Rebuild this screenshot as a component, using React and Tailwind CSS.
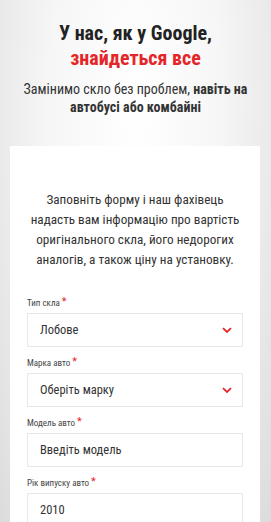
import React from "react";

function Chevron() {
  return (
    <svg width="10" height="7" viewBox="0 0 10 7" className="shrink-0">
      <path d="M1 1.2 L5 5 L9 1.2" fill="none" stroke="#e52629" strokeWidth="1.8" />
    </svg>
  );
}

function Label({ children }) {
  return (
    <div className="text-[9px] leading-[12px] text-[#444] mb-[4px] flex items-start">
      <span>{children}</span>
      <span className="text-[#e52629] text-[11px] leading-[10px] ml-[2px]">*</span>
    </div>
  );
}

function Field({ value, select }) {
  return (
    <div className="h-[34px] border border-[#e8e8e8] bg-white flex items-center justify-between pl-[12px] pr-[10px]">
      <span className="text-[12.5px] text-[#333]">{value}</span>
      {select && <Chevron />}
    </div>
  );
}

const lines = [
  "Заповніть форму і наш фахівець",
  "надасть вам інформацію про вартість",
  "оригінального скла, його недорогих",
  "аналогів, а також ціну на установку.",
];

export default function App() {
  return (
    <div
      className="w-[271px] h-[522px] overflow-hidden bg-[radial-gradient(ellipse_at_50%_20%,#ffffff_0%,#f6f6f6_45%,#dcdcdc_100%)]"
      style={{ fontFamily: "Roboto, 'Noto Sans', sans-serif", fontStretch: "condensed" }}
    >
      <div className="pt-[21px] text-center">
        <h1 className="text-[20px] leading-[25px] font-bold text-[#222]">
          У нас, як у Google,
          <br />
          <span className="text-[#e52629]">знайдеться все</span>
        </h1>
        <p className="mt-[9px] text-[14px] leading-[18px] text-[#333]">
          Замінимо скло без проблем, <b className="font-bold">навіть на
          <br />
          автобусі або комбайні</b>
        </p>
      </div>
      <div className="mt-[30px] ml-[10px] w-[250px] bg-white px-[17px] pt-[44px] pb-[20px]">
        <div className="flex flex-col items-center text-[13.2px] leading-[20px] text-[#333]">
          {lines.map((l) => (
            <span key={l} className="whitespace-nowrap">{l}</span>
          ))}
        </div>
        <div className="mt-[27px] flex flex-col gap-[10px]">
          <div>
            <Label>Тип скла</Label>
            <Field value="Лобове" select />
          </div>
          <div>
            <Label>Марка авто</Label>
            <Field value="Оберіть марку" select />
          </div>
          <div>
            <Label>Модель авто</Label>
            <Field value="Введіть модель" />
          </div>
          <div>
            <Label>Рік випуску авто</Label>
            <Field value="2010" />
          </div>
        </div>
      </div>
    </div>
  );
}
